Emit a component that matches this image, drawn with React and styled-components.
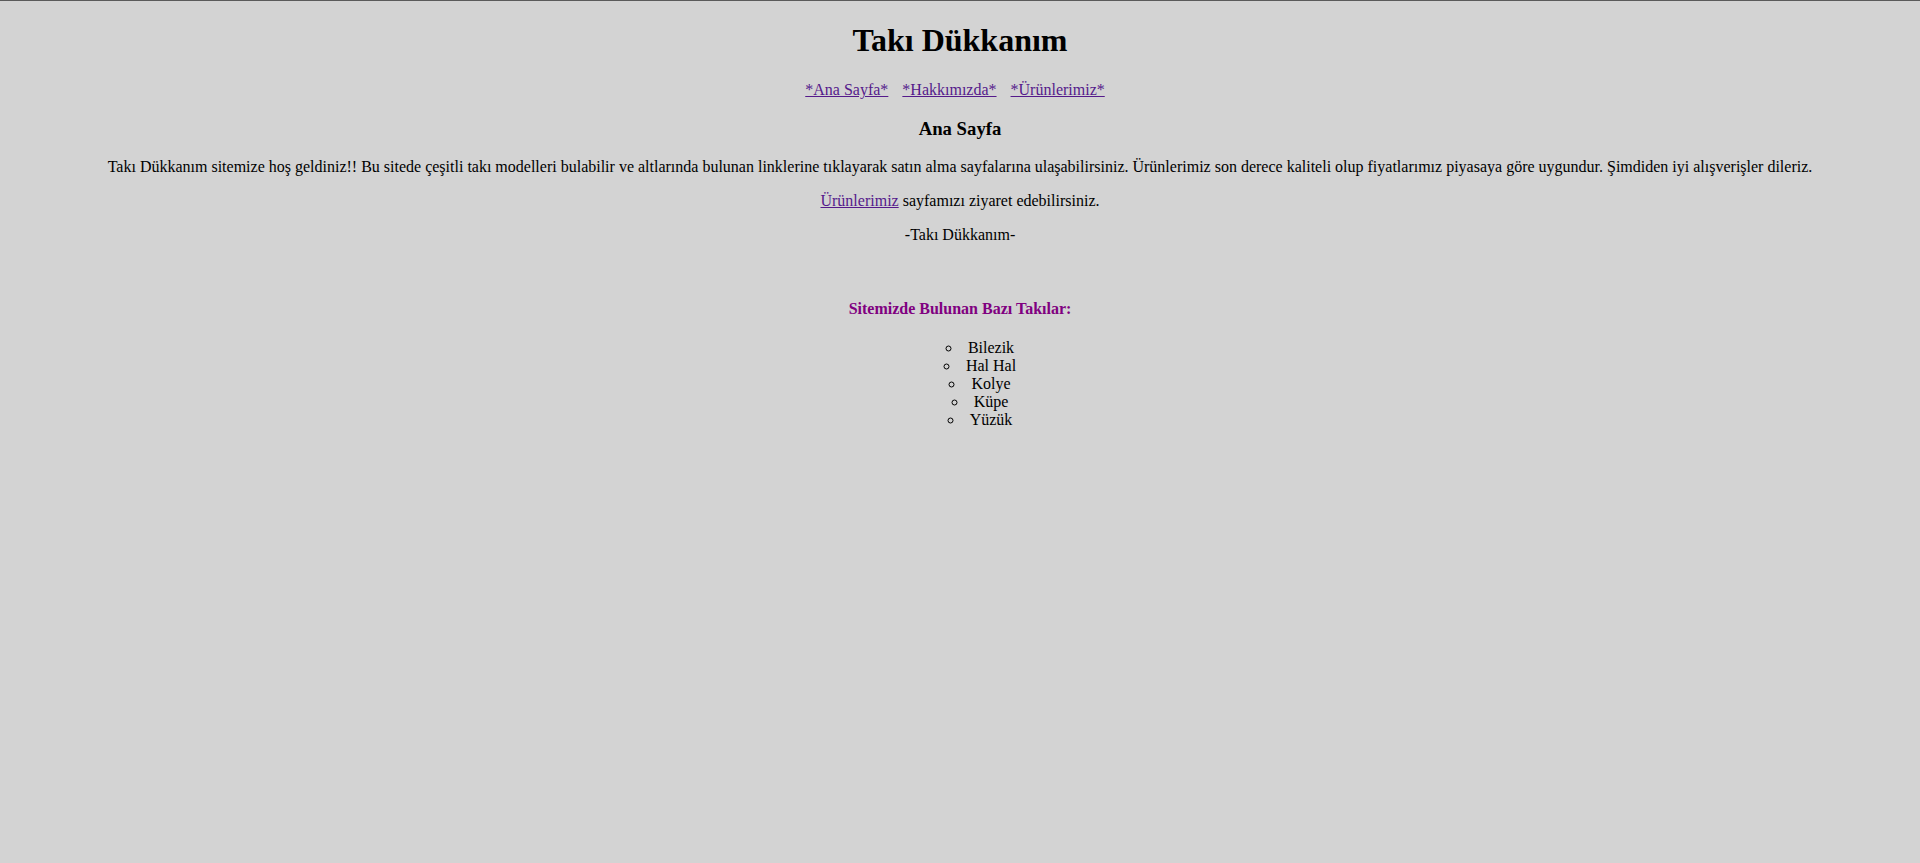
import React from 'react'
import styled, { createGlobalStyle } from 'styled-components'

const GlobalStyle = createGlobalStyle`
  html {
    border-top: 1px solid #5a5a5a;
    background-color: lightgray;
  }
  body {
    margin: 0 8px 8px;
    background-color: lightgray;
    font-family: "Liberation Serif", "Times New Roman", serif;
    font-size: 16px;
    color: black;
    text-align: center;
  }
`

const Page = styled.div`
  display: flow-root;
`

const Title = styled.h1`
  font-size: 2em;
  margin: 0.67em 0;
`

const Nav = styled.p`
  margin: 1em 0;
  padding-right: 10px;
`

const NavLink = styled.a`
  color: #551a8b;
  text-decoration: underline;
  margin: 0 7px;
`

const PageTitle = styled.h3`
  font-size: 1.17em;
  margin: 1em 0;
`

const Text = styled.p`
  margin: 1em 0;
`

const Link = styled.a`
  color: #551a8b;
  text-decoration: underline;
`

const SubTitle = styled.h4`
  color: purple;
  margin: 1.33em 0;
`

const List = styled.ul`
  margin: 1em 0;
  padding-left: 40px;
  list-style-type: circle;
  list-style-position: inside;
`

const Item = styled.li``

const items = ['Bilezik', 'Hal Hal', 'Kolye', 'Küpe', 'Yüzük']

const App = () => {
  return (
    <Page>
      <GlobalStyle />
      <Title>Takı Dükkanım</Title>
      <Nav>
        <NavLink href="#">*Ana Sayfa*</NavLink>
        <NavLink href="#">*Hakkımızda*</NavLink>
        <NavLink href="#">*Ürünlerimiz*</NavLink>
      </Nav>
      <PageTitle>Ana Sayfa</PageTitle>
      <Text>
        Takı Dükkanım sitemize hoş geldiniz!! Bu sitede çeşitli takı modelleri bulabilir ve altlarında bulunan linklerine tıklayarak satın alma sayfalarına ulaşabilirsiniz. Ürünlerimiz son derece kaliteli olup fiyatlarımız piyasaya göre uygundur. Şimdiden iyi alışverişler dileriz.
      </Text>
      <Text>
        <Link href="#">Ürünlerimiz</Link> sayfamızı ziyaret edebilirsiniz.
      </Text>
      <Text>-Takı Dükkanım-</Text>
      <br />
      <SubTitle>Sitemizde Bulunan Bazı Takılar:</SubTitle>
      <List>
        {items.map(item => (
          <Item key={item}>{item}</Item>
        ))}
      </List>
    </Page>
  )
}

export default App
